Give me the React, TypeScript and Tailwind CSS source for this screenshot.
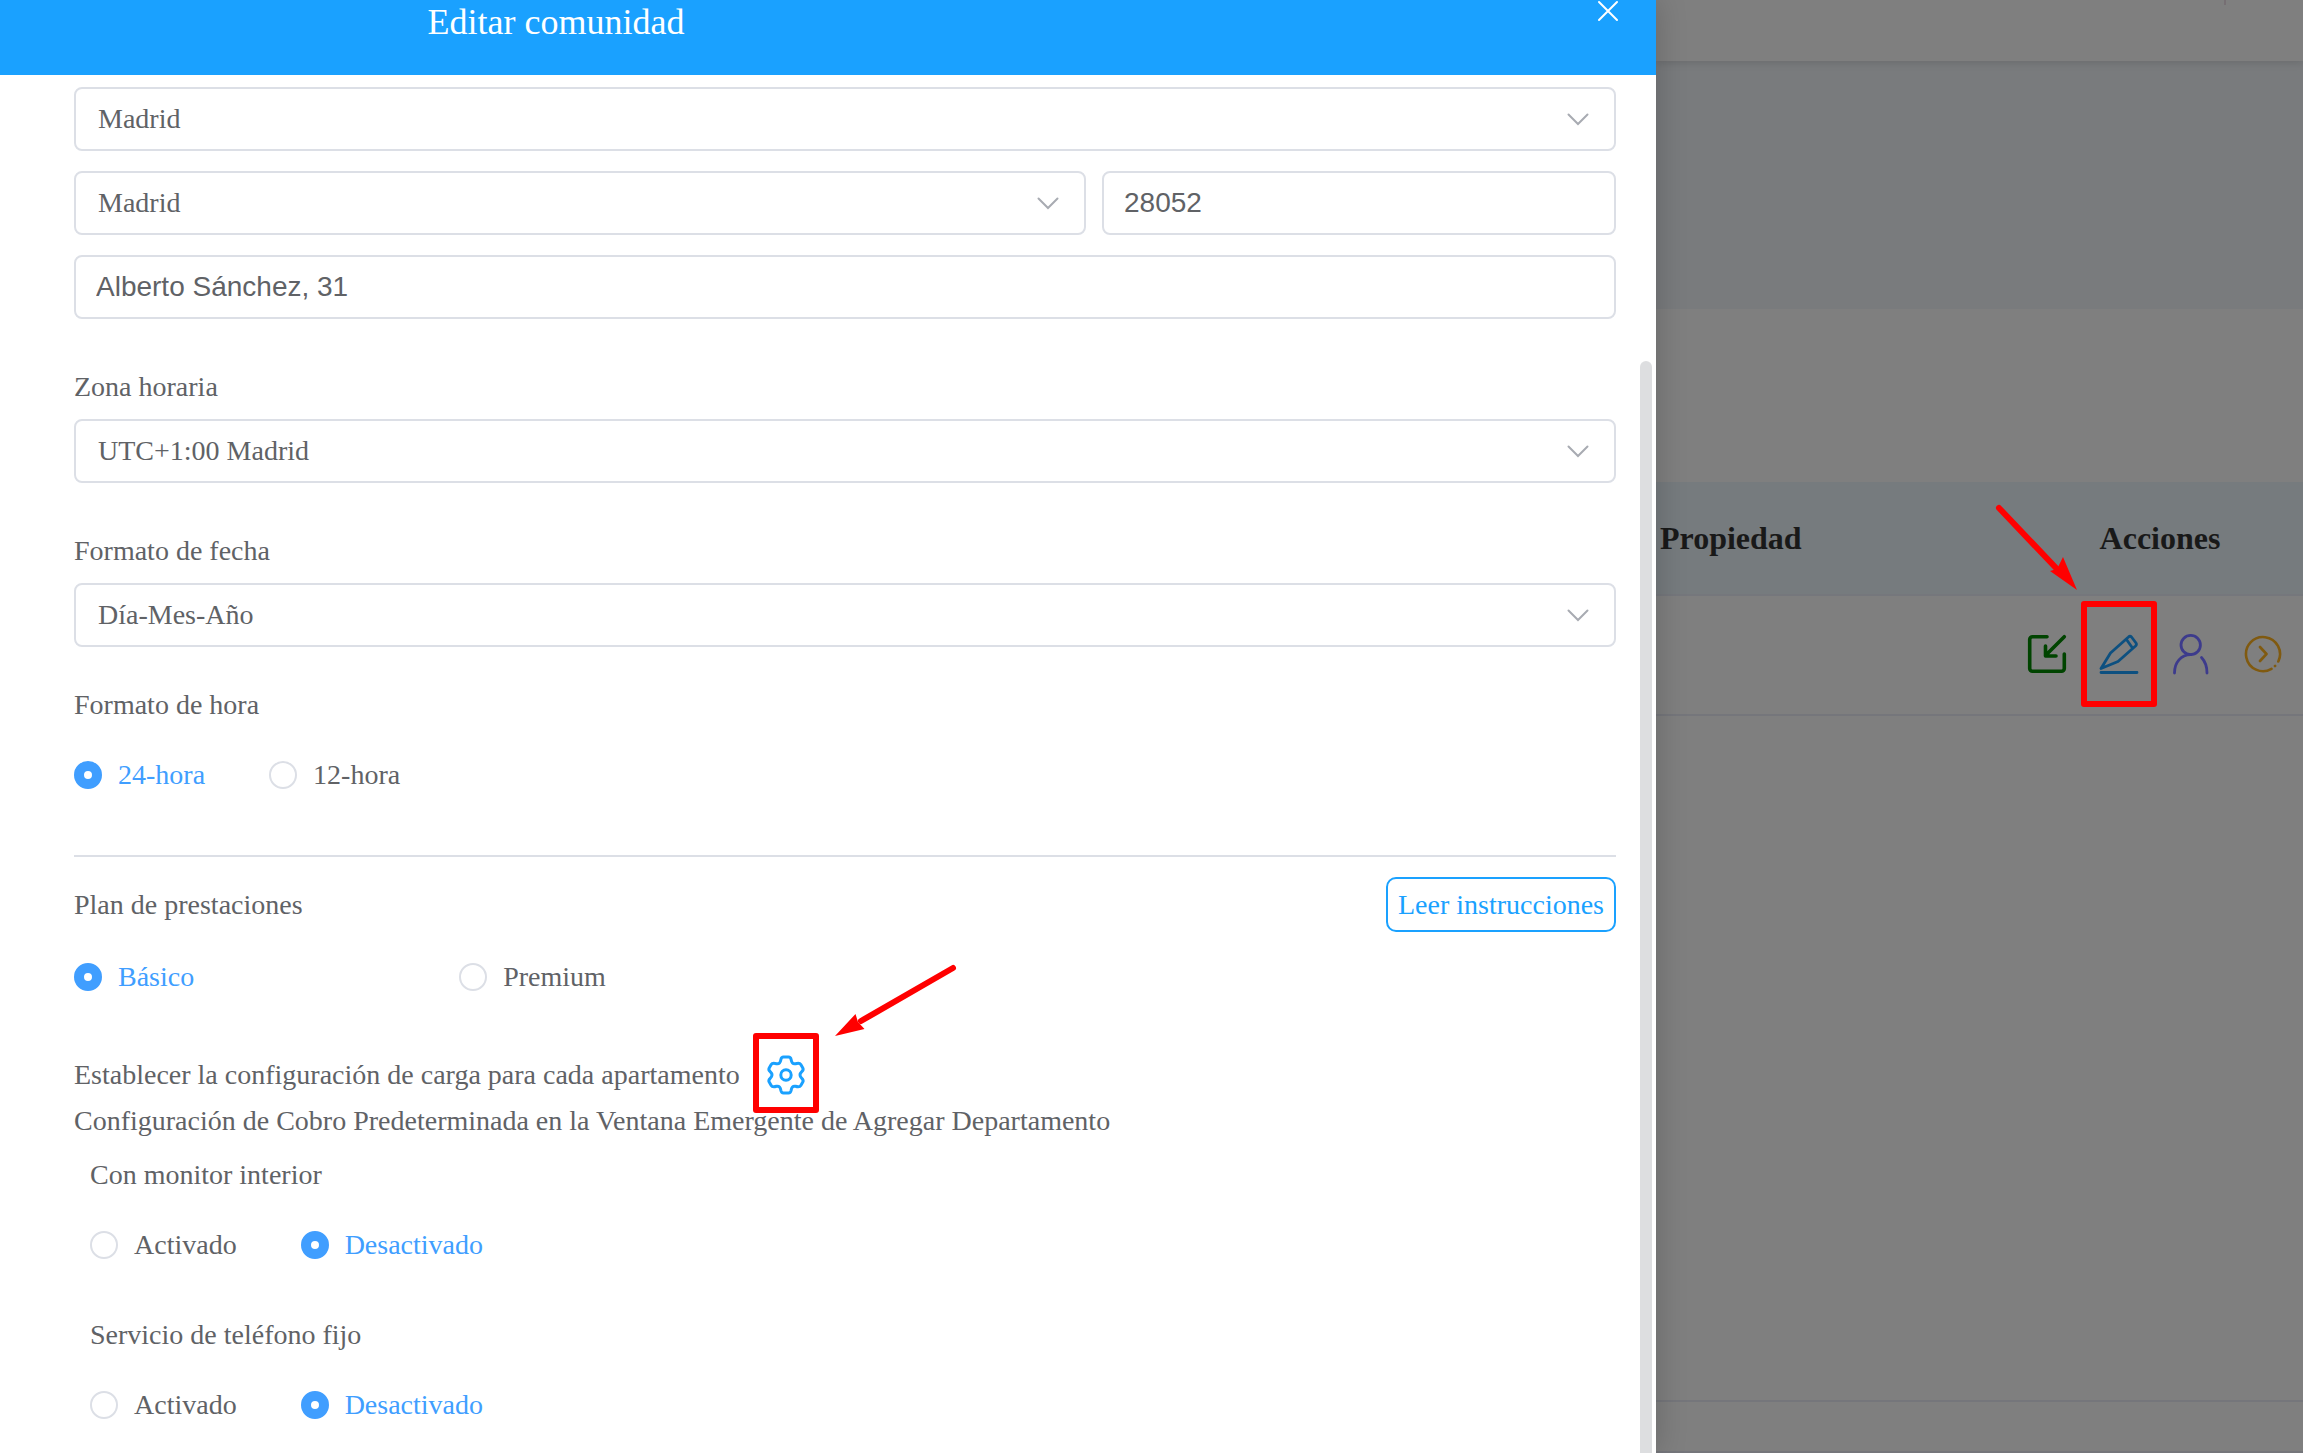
import { useId, useState } from 'react'
import type { ReactNode } from 'react'

const CONTROL = 'h-16 w-full rounded-lg border-2 border-[#dcdfe6] bg-white text-[28px] text-[#606266] outline-none'

interface SelectFieldProps {
  label: string
  value: string
  hideLabel?: boolean
}

function SelectField({ label, value, hideLabel }: SelectFieldProps) {
  const id = useId()

  return (
    <div className="w-full">
      {!hideLabel && <label htmlFor={id} className="mb-4 block leading-8">{label}</label>}
      <div className="relative">
        <select id={id} aria-label={hideLabel ? label : undefined} defaultValue={value} className={`${CONTROL} appearance-none pr-16 pl-[22px]`}>
          <option>{value}</option>
        </select>
        <svg viewBox="0 0 24 24" className="pointer-events-none absolute top-5 right-[26px] size-6" fill="none" stroke="#a8abb2" strokeWidth="2" strokeLinecap="round">
          <path d="M2.500 7.500 12 17l9.500-9.500" />
        </svg>
      </div>
    </div>
  )
}

interface TextFieldProps {
  label: string
  value: string
}

function TextField({ label, value }: TextFieldProps) {
  return <input aria-label={label} defaultValue={value} className={`${CONTROL} px-5 font-['Liberation_Sans',Arial,sans-serif]`} />
}

interface RadioGroupProps {
  title: string
  options: string[]
  initial: string
  gap: string
  action?: ReactNode
}

function RadioGroup({ title, options, initial, gap, action }: RadioGroupProps) {
  const name = useId()
  const [selected, setSelected] = useState(initial)

  return (
    <fieldset aria-label={title}>
      <div className="flex items-center justify-between">
        <span className="leading-8">{title}</span>
        {action}
      </div>
      <div className={`flex ${gap}`}>
        {options.map((option) => (
          <label key={option} className={`flex items-center gap-4 leading-8 ${selected === option ? 'text-[#409eff]' : ''}`}>
            <input
              type="radio"
              name={name}
              checked={selected === option}
              onChange={() => setSelected(option)}
              className="size-7 appearance-none rounded-full border-2 border-[#dcdfe6] bg-white checked:border-10 checked:border-[#409eff]"
            />
            {option}
          </label>
        ))}
      </div>
    </fieldset>
  )
}

function GearIcon() {
  return (
    <svg viewBox="0 0 40 40" className="size-10" fill="none" stroke="#1aa1ff" strokeWidth="3" strokeLinejoin="round">
      <path d="M17.500 2h5c1.500 0 2.300 1 2.600 2.500.5 3 1.700 4.800 4.400 4.200 2.500-.8 4.300-.9 5.300.8l2 3.400c.8 1.500.2 2.700-1 3.800-2.400 2.200-2.400 4.400 0 6.600 1.200 1.100 1.800 2.300 1 3.800l-2 3.400c-1 1.700-2.800 1.600-5.300.8-2.700-.6-3.900 1.200-4.400 4.200-.3 1.500-1.100 2.500-2.600 2.500h-5c-1.500 0-2.300-1-2.600-2.500-.5-3-1.700-4.800-4.400-4.200-2.500.8-4.300.9-5.300-.8l-2-3.400c-.8-1.500-.2-2.700 1-3.800 2.400-2.200 2.400-4.400 0-6.600-1.200-1.100-1.800-2.300-1-3.800l2-3.400c1-1.700 2.800-1.600 5.300-.8 2.700.6 3.900-1.200 4.400-4.200C15.200 3 16 2 17.500 2z" />
      <circle cx="20" cy="20" r="5.200" />
    </svg>
  )
}

function EnterIcon() {
  return (
    <svg viewBox="0 0 40 40" className="size-10" fill="none" stroke="#004400" strokeWidth="3.600" strokeLinecap="round" strokeLinejoin="round">
      <path d="M20 2.700H5.500a2.800 2.800 0 0 0-2.800 2.800v29a2.800 2.800 0 0 0 2.800 2.800h29a2.800 2.800 0 0 0 2.800-2.800V20" />
      <path d="M37.300 2.700 18.500 21.500M18.500 12v10H29" />
    </svg>
  )
}

function PencilIcon() {
  return (
    <svg viewBox="0 0 40 40" className="size-10" fill="none" stroke="#0d5080" strokeWidth="2.800" strokeLinecap="round" strokeLinejoin="round">
      <path d="M2 38.500h36M2 34.500 11.500 19 29.500 3q1.500-1.500 3 0l4.500 6q1 1.500-.5 3L19 27.500zM27.500 5.500l6 8.500" />
    </svg>
  )
}

function PersonIcon() {
  return (
    <svg viewBox="0 0 40 42" className="h-[42px] w-10" fill="none" stroke="#3d3b8c" strokeWidth="2.800" strokeLinecap="round">
      <circle cx="19.700" cy="12" r="9.700" />
      <path d="M3.500 40C3.500 29 10 22 19.700 21.700M30.500 24.500c3.800 4 5.500 9 5.500 15.500" />
    </svg>
  )
}

function NextIcon() {
  return (
    <svg viewBox="0 0 40 40" className="size-10" fill="none" stroke="#805a10" strokeWidth="2.600" strokeLinecap="round" strokeLinejoin="round">
      <path d="M28.500 34.800A17 17 0 1 1 35.300 27.500M32 32l.1-.1M17 13l6.500 7-6.500 7" />
    </svg>
  )
}

const ACTIONS = [
  { label: 'Entrar', icon: <EnterIcon /> },
  { label: 'Editar', icon: <PencilIcon />, marked: true },
  { label: 'Usuario', icon: <PersonIcon /> },
  { label: 'Siguiente', icon: <NextIcon /> },
]

function Marker({ className }: { className: string }) {
  return <span className={`pointer-events-none absolute rounded-[3px] border-6 border-[#f00] ${className}`} />
}

// Dimmed list page that stays visible next to the drawer
function ListPage() {
  return (
    <main className="flex min-w-0 flex-1 flex-col bg-[#7f7f7f] text-[#191919]">
      <div className="z-10 flex h-[61px] justify-end pr-[77px] shadow-[0_2px_8px_rgba(0,0,0,0.12)]">
        <span className="h-[5px] w-0.5 bg-[#766f73]" />
      </div>
      <div className="mb-[173px] h-[248px] bg-[#797b7d]" />
      <table className="w-full table-fixed border-collapse">
        <thead>
          <tr className="h-[113px] border-b-2 border-[#75777c] bg-[#767b7e] text-[32px]">
            <th className="w-[361px] pl-1 text-left font-bold">Propiedad</th>
            <th className="font-bold">Acciones</th>
          </tr>
        </thead>
        <tbody>
          <tr className="h-[120px] border-b-2 border-[#75767b]">
            <td />
            <td className="pr-[10px] pb-0.5">
              <div className="flex items-center justify-center gap-8">
                {ACTIONS.map(({ label, icon, marked }) => (
                  <button key={label} type="button" aria-label={label} className="relative">
                    {icon}
                    {marked && <Marker className="-inset-x-[18px] -inset-y-[33px]" />}
                    {marked && (
                      <svg viewBox="0 0 90 90" className="pointer-events-none absolute -top-[134px] -left-[106px] size-[90px] max-w-none" fill="red">
                        <path d="M6 8 64 69" stroke="red" strokeWidth="6" strokeLinecap="round" />
                        <path d="m70 57 14 33-27-19 7-2z" />
                      </svg>
                    )}
                  </button>
                ))}
              </div>
            </td>
          </tr>
        </tbody>
      </table>
      <div className="flex-1" />
      <div className="h-[53px] border-y-2 border-[#75767b]" />
    </main>
  )
}

function EditDrawer() {
  return (
    <aside className="z-20 flex w-[1656px] max-w-[72%] shrink-0 flex-col bg-white text-[#606266] shadow-[0_0_30px_rgba(0,0,0,0.2)]">
      <header className="flex h-[75px] items-start bg-[#1aa1ff] text-white">
        <h1 className="w-[1112px] text-center text-[36px] leading-[44px]">Editar comunidad</h1>
        <button type="button" aria-label="Cerrar" className="mr-[37px] ml-auto">
          <svg viewBox="0 0 22 22" className="size-[22px]" fill="none" stroke="currentColor" strokeWidth="2" strokeLinecap="round">
            <path d="m2 2 18 18M20 2 2 20" />
          </svg>
        </button>
      </header>
      <div className="flex min-h-0 flex-1">
        <form className="min-w-0 flex-1 pt-3 pl-[74px]">
          <div className="flex flex-col gap-5">
            <SelectField label="Provincia" value="Madrid" hideLabel />
            <div className="grid grid-cols-[1012fr_514fr] gap-4">
              <SelectField label="Ciudad" value="Madrid" hideLabel />
              <TextField label="Código postal" value="28052" />
            </div>
            <TextField label="Dirección" value="Alberto Sánchez, 31" />
          </div>
          <div className="mt-[52px] flex flex-col gap-[52px]">
            <SelectField label="Zona horaria" value="UTC+1:00 Madrid" />
            <SelectField label="Formato de fecha" value="Día-Mes-Año" />
          </div>
          <div className="mt-[42px] mb-16">
            <RadioGroup title="Formato de hora" options={['24-hora', '12-hora']} initial="24-hora" gap="mt-[38px] gap-16" />
          </div>
          <hr className="border-t-2 border-[#dcdfe6]" />
          <div className="mt-5">
            <RadioGroup
              title="Plan de prestaciones"
              options={['Básico', 'Premium']}
              initial="Básico"
              gap="mt-[29px] gap-[265px]"
              action={<button type="button" className="h-[55px] rounded-[10px] border-2 border-[#1aa1ff] px-[10px] text-[#1aa1ff]">Leer instrucciones</button>}
            />
          </div>
          <div className="mt-[62px] flex items-center gap-[26px]">
            <span>Establecer la configuración de carga para cada apartamento</span>
            <button type="button" aria-label="Configurar" className="relative">
              <GearIcon />
              <Marker className="-inset-x-[13px] -top-[22px] -bottom-[18px]" />
              <svg viewBox="0 0 124 74" className="pointer-events-none absolute bottom-[59px] left-[69px] h-[74px] w-[124px] max-w-none" fill="red">
                <path d="M118 6 26 59" stroke="red" strokeWidth="6" strokeLinecap="round" />
                <path d="m20.500 52 2.500 8 6.500 7L0 74z" />
              </svg>
            </button>
          </div>
          <p className="mt-[10px] leading-8">Configuración de Cobro Predeterminada en la Ventana Emergente de Agregar Departamento</p>
          <div className="mt-[22px] flex flex-col gap-[58px] pl-4">
            <RadioGroup title="Con monitor interior" options={['Activado', 'Desactivado']} initial="Desactivado" gap="mt-[38px] gap-16" />
            <RadioGroup title="Servicio de teléfono fijo" options={['Activado', 'Desactivado']} initial="Desactivado" gap="mt-[38px] gap-16" />
          </div>
        </form>
        <div className="w-10 shrink-0 pt-[286px] pr-1 pl-6">
          <div className="h-full w-3 rounded-t-full bg-[#dddee0]" />
        </div>
      </div>
    </aside>
  )
}

export default function App() {
  return (
    <div className="flex h-screen overflow-hidden font-['Liberation_Serif','Times_New_Roman',serif] text-[28px] leading-9">
      <EditDrawer />
      <ListPage />
    </div>
  )
}
